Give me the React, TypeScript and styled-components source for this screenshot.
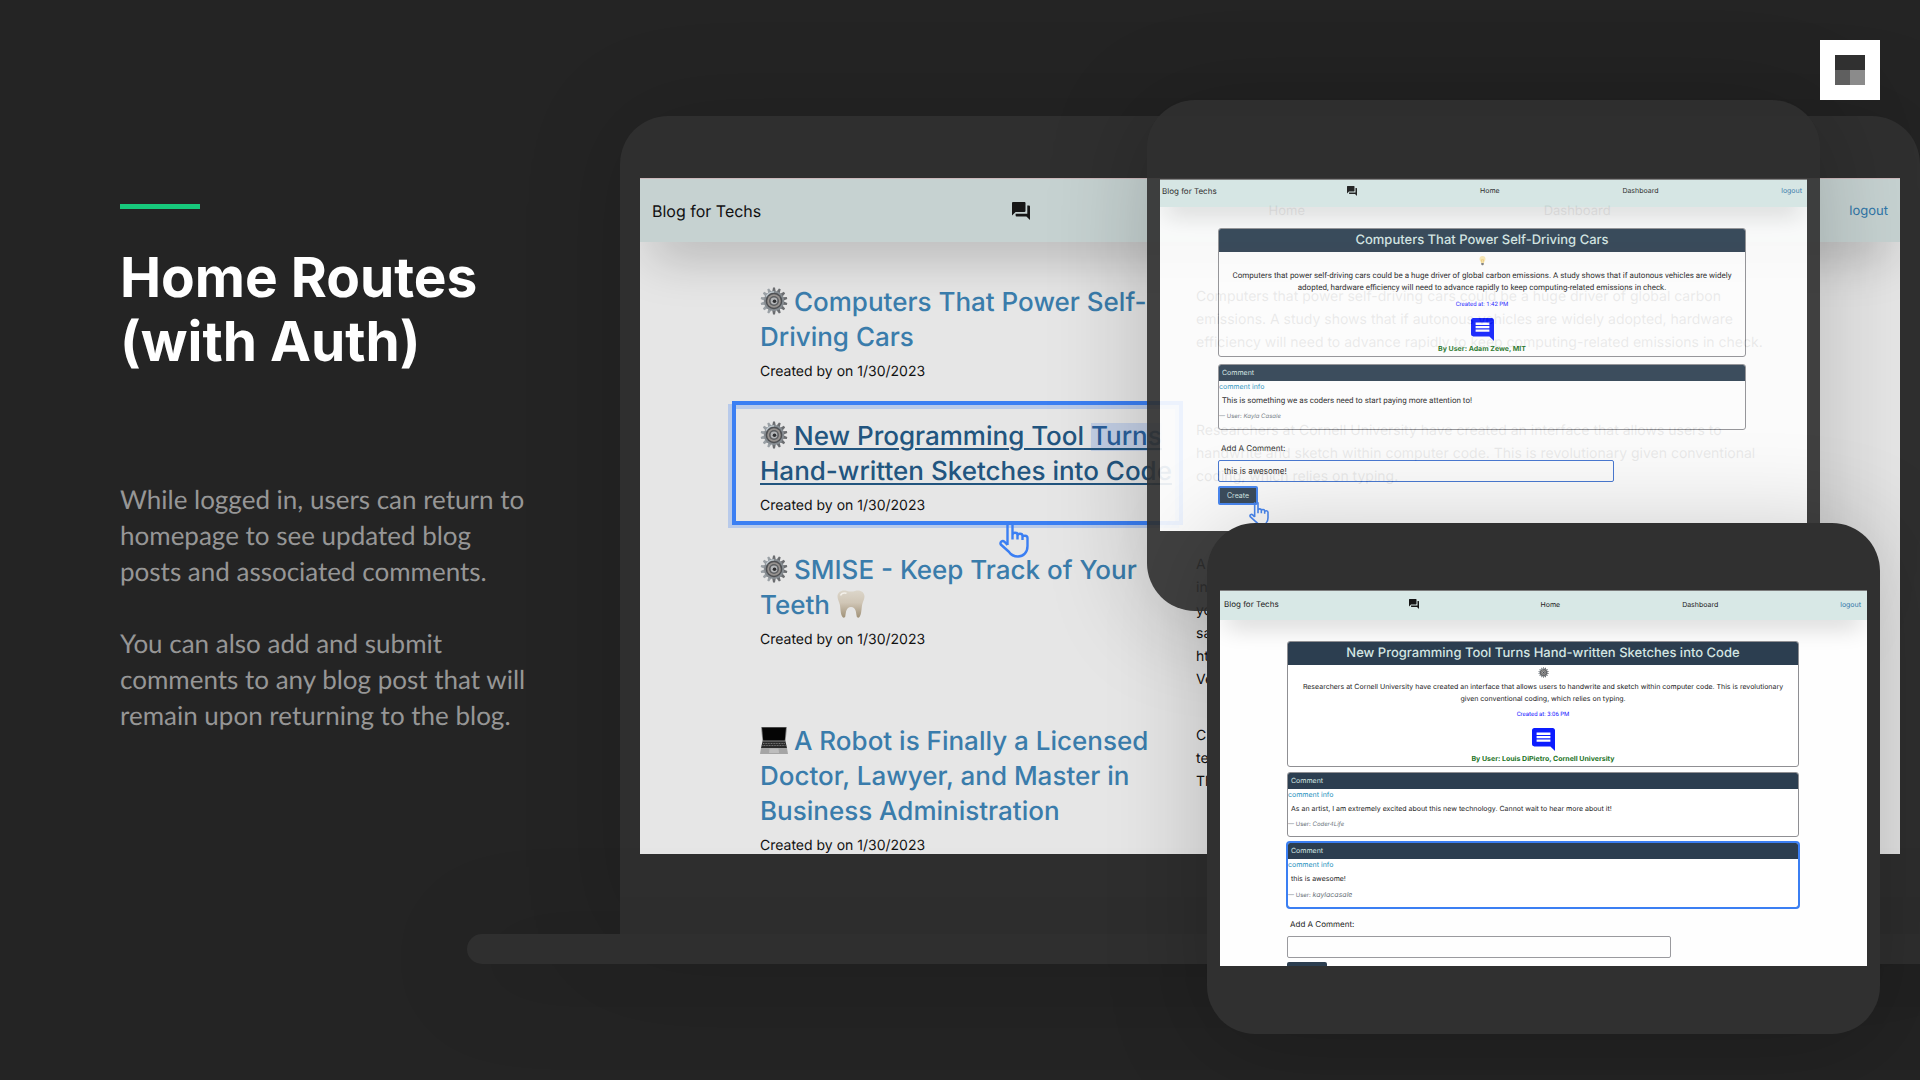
import React from "react";
import styled, { createGlobalStyle, css } from "styled-components";

const GlobalStyle = createGlobalStyle`
  *, *::before, *::after { box-sizing: border-box; }
  body { margin: 0; background: #242424; text-rendering: geometricPrecision; }
  h1, h2, p { margin: 0; }
  a { color: inherit; text-decoration: none; }
`;

const sans = `Inter, "Liberation Sans", sans-serif`;
const compactSans = `Roboto, "Liberation Sans", sans-serif`;
const blue = "#3b7ff3";

/* ---------- slide ---------- */

const Slide = styled.main`
  position: relative;
  display: grid;
  grid-template-columns: 620px minmax(0, 1fr);
  min-height: 100vh;
  overflow: hidden;
  background: #242424;
`;

const Caption = styled.section`
  padding: 204px 88px 0 120px;
  font-family: Lato, "Open Sans", sans-serif;
`;

const Accent = styled.div`
  width: 80px;
  height: 5px;
  background: #17c97c;
`;

const Heading = styled.h1`
  margin-top: 37px;
  font-family: ${sans};
  font-size: 55px;
  line-height: 64px;
  font-weight: 700;
  color: #fff;
`;

const Body = styled.div`
  display: flex;
  flex-direction: column;
  gap: 36px;
  margin-top: 107px;
  font-size: 26px;
  line-height: 36px;
  color: #969696;
`;

const Showcase = styled.section`
  position: relative;
  padding-top: 116px;
  font-family: ${sans};
`;

const Logo = styled.svg`
  position: absolute;
  top: 40px;
  right: 40px;
  width: 60px;
  height: 60px;
`;

/* ---------- laptop ---------- */

const LaptopLid = styled.div`
  padding: 62px 20px 80px;
  border-radius: 48px 48px 0 0;
  background: #2f2f2f;
  box-shadow: 0 0 100px rgba(0, 0, 0, 0.16);
`;

const LaptopBase = styled.div`
  position: relative;
  height: 30px;
  margin: 0 -153px;
  border-radius: 15px;
  background: #2f2f2f;
  box-shadow: 0 10px 100px rgba(0, 0, 0, 0.2);
`;

const LaptopScreen = styled.div`
  height: 676px;
  overflow: hidden;
  background: #e6e6e6;
  color: #111;
`;

const LaptopNav = styled.nav`
  position: relative;
  display: flex;
  align-items: center;
  justify-content: space-between;
  height: 64px;
  padding: 0 12px;
  border-top: 1px solid #cdb9bb;
  background: #c6d2d1;
  box-shadow: 0 25px 50px -12px rgba(0, 0, 0, 0.25);
  font-size: 13px;
`;

const Brand = styled.span<{ $size: number }>`
  font-size: ${(p) => p.$size}px;
`;

const LogoutLink = styled.a<{ $size: number }>`
  font-size: ${(p) => p.$size}px;
  color: #2f76a8;
`;

const Posts = styled.div`
  display: grid;
  gap: 33px;
  padding: 43px 120px 0;
`;

const Post = styled.article`
  display: grid;
  grid-template-columns: 420px minmax(0, 1fr);
  gap: 16px;
`;

const PostIntro = styled.div<{ $selected?: boolean }>`
  position: relative;
  ${(p) =>
    p.$selected &&
    css`
      &::after {
        content: "";
        position: absolute;
        inset: -18px -3px -5px -28px;
        border: 4px solid ${blue};
        box-shadow:
          -4px 3px 0 rgba(59, 127, 243, 0.27),
          inset -4px 4px 0 rgba(59, 127, 243, 0.27);
      }
    `}
`;

const PostTitle = styled.h2`
  font-size: 26px;
  line-height: 35px;
  font-weight: 500;
  color: #3a7cab;
`;

const PostLink = styled.a<{ $active?: boolean }>`
  ${(p) =>
    p.$active &&
    css`
      color: #22557f;
      text-decoration: underline;
      text-decoration-thickness: 2px;
      text-underline-offset: 3px;
    `}
`;

const Marked = styled.mark`
  background: linear-gradient(#c3cfe5, #c3cfe5) center / 100% 28px no-repeat;
  color: #2a5f9b;
`;

const Glyph = styled.svg<{ $size: number }>`
  width: ${(p) => p.$size}px;
  height: ${(p) => p.$size}px;
  flex: none;
`;

const NavGlyph = styled(Glyph)`
  margin-left: ${(p) => (p.$size > 12 ? 12 : 8)}px;
`;

const TitleGlyph = styled(Glyph)`
  margin-right: 6px;
  vertical-align: -4px;
`;

const PostMeta = styled.p`
  margin-top: 3px;
  font-size: 14px;
  line-height: 28px;
`;

const PostText = styled.p`
  font-size: 14px;
  line-height: 23px;
`;

const Line = styled.span`
  display: block;
`;

const Pointer = styled.svg<{ $w: number; $x: number; $y: number }>`
  position: absolute;
  z-index: 1;
  left: ${(p) => p.$x}px;
  top: ${(p) => p.$y}px;
  width: ${(p) => p.$w}px;
  overflow: visible;
`;

/* ---------- tablets ---------- */

const Tablet = styled.div<{ $back?: boolean }>`
  position: absolute;
  top: ${(p) => (p.$back ? 100 : 523)}px;
  right: ${(p) => (p.$back ? 100 : 40)}px;
  width: 673px;
  padding: ${(p) => (p.$back ? "79px 13px 80px" : "67px 13px 68px")};
  border-radius: 48px;
  background: #303030;
  box-shadow: 0 10px 100px rgba(0, 0, 0, 0.22);
  opacity: ${(p) => (p.$back ? 0.91 : 1)};
`;

const TabletScreen = styled.div<{ $back?: boolean }>`
  height: ${(p) => (p.$back ? 352 : 376)}px;
  overflow: hidden;
  border-top: 1px solid #7c7c7c;
  background: #fefefe;
  color: #222;
`;

const TabletNav = styled.nav<{ $back?: boolean }>`
  display: flex;
  align-items: center;
  justify-content: space-between;
  height: ${(p) => (p.$back ? 27 : 29)}px;
  padding: ${(p) => (p.$back ? "0 5px 6px 2px" : "0 6px 3px 4px")};
  background: #d8e8e6;
  box-shadow: 0 12px 24px -6px rgba(0, 0, 0, 0.2);
  font-size: 7px;
`;

const Stack = styled.div<{ $back?: boolean }>`
  display: flex;
  flex-direction: column;
  gap: ${(p) => (p.$back ? 7 : 5)}px;
  padding: ${(p) => (p.$back ? "21px 61px 0 58px" : "21px 68px 0 67px")};
`;

const Card = styled.article<{ $selected?: boolean }>`
  overflow: hidden;
  border: 1px solid #8f8f93;
  border-radius: 3px;
  background: #fff;
  ${(p) =>
    p.$selected &&
    css`
      outline: 2px solid ${blue};
      outline-offset: -1px;
    `}
`;

const Story = styled(Card)`
  display: flex;
  flex-direction: column;
  align-items: center;
  padding-bottom: 2px;
`;

const StoryTitle = styled.h2<{ $back?: boolean }>`
  align-self: stretch;
  margin-bottom: ${(p) => (p.$back ? 3 : 2)}px;
  background: #2c3e50;
  color: #d4e6e3;
  font-size: 13px;
  line-height: 23px;
  font-weight: 500;
  text-align: center;
`;

const copyText = css<{ $back?: boolean }>`
  font-family: ${(p) => (p.$back ? compactSans : sans)};
  font-size: ${(p) => (p.$back ? 8 : 7)}px;
  line-height: 12px;
`;

const StoryText = styled.p<{ $back?: boolean }>`
  ${copyText}
  padding: ${(p) => (p.$back ? "4px 12px 0" : "3px 6px 0")};
  text-align: center;
`;

const Created = styled.p<{ $back?: boolean }>`
  margin: ${(p) => (p.$back ? 7 : 6)}px 0 9px;
  font-family: ${compactSans};
  font-size: 6px;
  line-height: 8px;
  color: #1414ff;
`;

const Author = styled.p`
  margin-top: 3px;
  font-size: 7px;
  line-height: 10px;
  font-weight: 700;
  color: #1d741f;
`;

const CommentTitle = styled.h2`
  padding-left: 3px;
  background: #2c3e50;
  color: #d4e6e3;
  font-size: 7px;
  line-height: 16px;
  font-weight: 400;
`;

const CommentInfo = styled.a`
  display: block;
  margin-top: 1px;
  font-size: 7px;
  line-height: 10px;
  color: #2490bd;
`;

const CommentText = styled.p<{ $back?: boolean }>`
  ${copyText}
  padding: 3px 3px 6px;
`;

const CommentUser = styled.p<{ $large?: boolean; $back?: boolean }>`
  padding-bottom: ${(p) => (p.$back ? 8 : 7)}px;
  font-size: 6px;
  line-height: 8px;
  color: #6c757d;
  em {
    font-size: ${(p) => (p.$large ? 7 : 6)}px;
    line-height: 8px;
  }
`;

const CommentForm = styled.form`
  display: flex;
  flex-direction: column;
  align-items: flex-start;
  margin-top: 5px;
`;

const Label = styled.label`
  padding-left: 3px;
  font-size: 8px;
  line-height: 12px;
`;

const TextBox = styled.input<{ $focused?: boolean }>`
  width: 75%;
  height: 22px;
  margin: 6px 0 4px;
  padding: 0 5px;
  border: 1px solid ${(p) => (p.$focused ? "#3b6fd0" : "#9a9a9e")};
  border-radius: 2px;
  outline: none;
  background: transparent;
  color: #222;
  font: 8px ${sans};
`;

const CreateButton = styled.button<{ $selected?: boolean }>`
  height: 19px;
  padding: 0 7px;
  border: 2px solid ${(p) => (p.$selected ? blue : "#2c3e50")};
  border-radius: 2px;
  background: #2c3e50;
  color: #d4e6e3;
  font: 7px ${sans};
`;

/* ---------- drawings ---------- */

function BrandMark() {
  return (
    <Logo viewBox="0 0 60 60" role="img" aria-label="Logo">
      <rect width="60" height="60" fill="#fff" />
      <rect x="15" y="15" width="30" height="15" fill="#303030" />
      <rect x="15" y="30" width="15" height="15" fill="#5f5f5f" />
      <rect x="30" y="30" width="15" height="15" fill="#8b8b8b" />
    </Logo>
  );
}

function ForumIcon({ size }: { size: number }) {
  return (
    <NavGlyph $size={size} viewBox="2 2 20 20" aria-hidden="true">
      <path
        fill="#161616"
        d="M21 6h-2v9H6v2c0 .55.45 1 1 1h11l4 4V7c0-.55-.45-1-1-1zm-4 6V3c0-.55-.45-1-1-1H3c-.55 0-1 .45-1 1v14l4-4h10c.55 0 1-.45 1-1z"
      />
    </NavGlyph>
  );
}

function CommentIcon() {
  return (
    <Glyph $size={23} viewBox="2 2 20 20" aria-hidden="true">
      <path
        fill="#0c1cff"
        d="M21.99 4c0-1.100-.89-2-1.990-2H4c-1.100 0-2 .9-2 2v12c0 1.100.9 2 2 2h14l4 4-.01-18zM18 14H6v-2h12v2zm0-3H6V9h12v2zm0-3H6V6h12v2z"
      />
    </Glyph>
  );
}

const teeth = Array.from({ length: 14 }, (_, i) => (i * 360) / 14);

function GearShapes() {
  return (
    <>
      {teeth.map((angle) => (
        <path
          key={angle}
          d="M12.300 4.500 13 .6h2l.7 3.900z"
          fill={angle > 180 ? "#9aa0a5" : "#6b6d70"}
          transform={`rotate(${angle} 14 14)`}
        />
      ))}
      <circle cx="14" cy="14" r="10.200" fill="#858b90" />
      <circle cx="14" cy="14" r="8.300" fill="#4e5053" />
      <circle cx="14" cy="14" r="6.800" fill="#96928f" />
      <circle cx="14" cy="14" r="5" fill="#5d5f62" />
      <circle cx="14" cy="14" r="3.400" fill="#b4b6b8" />
      <circle cx="14.500" cy="14.300" r="1.800" fill="#2e2f31" />
      <path d="M6 9.500a9.200 9.200 0 0 1 8-4.700" stroke="#c3ccd2" strokeWidth="1.300" fill="none" />
    </>
  );
}

function LaptopShapes() {
  return (
    <>
      <path d="M1 1h26l-1.500 15h-23z" fill="#8d8d8d" />
      <path d="M2 1.500h24L24.800 14.500H3.200z" fill="#050505" />
      <path d="M2.500 15.500h23L27 22H1z" fill="#2b2b2b" />
      <path d="M3 17.500h22M2.500 19.500h23" stroke="#8a8a8a" strokeWidth=".8" strokeDasharray="1 .6" />
      <path d="M1 22h26l1 6H0z" fill="#a5a5a5" />
      <path d="M9.500 22.500h9l.6 4.500H9z" fill="#bdbdbd" />
    </>
  );
}

function ToothShapes() {
  return (
    <>
      <defs>
        <linearGradient id="enamel" x1="0" y1="0" x2="0" y2="1">
          <stop offset="0" stopColor="#dcd6ca" />
          <stop offset=".45" stopColor="#d0c6b6" />
          <stop offset="1" stopColor="#a09177" />
        </linearGradient>
      </defs>
      <path
        fill="url(#enamel)"
        d="M.5 6.500C.5 1.500 5.500-.6 10 .9c2.500.9 5.500.9 8 0C22.500-.6 27.500 1.500 27.500 6.500c0 3-1.700 5-2.300 8-.9 4.500-.5 9.500-2.700 12.600-.9 1.100-2.500.8-2.800-.8-.8-4-.6-9.300-5.700-9.300s-4.900 5.300-5.700 9.300c-.3 1.600-1.900 1.900-2.800.8C3.300 24 3.700 19 2.800 14.500c-.6-3-2.300-5-2.300-8z"
      />
      <path d="M3.500 5.500c1-2.300 3.500-3 6-2.200" stroke="#f3f0ea" strokeWidth="1.500" fill="none" />
    </>
  );
}

function Bulb() {
  return (
    <Glyph $size={11} viewBox="0 0 22 22" role="img" aria-label="light bulb">
      <path d="M11 2a6 6 0 0 0-6 6c0 3.500 3 5 3 8h6c0-3 3-4.500 3-8a6 6 0 0 0-6-6z" fill="#fbe9b4" />
      <path d="M9.500 15 9 9.500h4l-.5 5.500" stroke="#e5b94f" fill="none" />
      <path d="M8.500 16h5v3l-1.500 1.500h-2L8.500 19z" fill="#7b7b7b" />
    </Glyph>
  );
}

function Hand({ width, x, y }: { width: number; x: number; y: number }) {
  return (
    <Pointer $w={width} $x={x} $y={y} viewBox="0 0 30 34" aria-hidden="true">
      <path
        d="M8.500 21V-1M13.500 15.500V-1M13.500 11c0-3 5-3 5 0v4.500M18.500 12c0-3 5-3 5 0v4M23.500 13.500c0-2.500 5-2.500 5 .5v8c0 6.500-4 10.500-9.500 10.500-4.500 0-7-1.500-9.400-5L1.800 20.500c-1.200-2.500 1.700-4.600 3.700-2.700l3 3.200"
        fill="none"
        stroke={blue}
        strokeWidth="2.400"
        strokeLinejoin="round"
      />
    </Pointer>
  );
}

/* ---------- screens ---------- */

type PostProps = {
  glyph: "gear" | "laptop";
  title: React.ReactNode;
  selected?: boolean;
  children: React.ReactNode;
};

function BlogPost({ glyph, title, selected, children }: PostProps) {
  return (
    <Post>
      <PostIntro $selected={selected}>
        <PostTitle>
          <TitleGlyph $size={28} viewBox="0 0 28 28" role="img" aria-label={glyph}>
            {glyph === "gear" ? <GearShapes /> : <LaptopShapes />}
          </TitleGlyph>
          <PostLink href="#" $active={selected}>
            {title}
          </PostLink>
        </PostTitle>
        <PostMeta>Created by on 1/30/2023</PostMeta>
        {selected && <Hand width={30} x={239} y={105} />}
      </PostIntro>
      <PostText>{children}</PostText>
    </Post>
  );
}

function HomeScreen() {
  return (
    <LaptopScreen>
      <LaptopNav>
        <Brand $size={16}>Blog for Techs</Brand>
        <ForumIcon size={18} />
        <a href="#">Home</a>
        <a href="#">Dashboard</a>
        <LogoutLink href="#" $size={13}>logout</LogoutLink>
      </LaptopNav>
      <Posts>
        <BlogPost glyph="gear" title="Computers That Power Self-Driving Cars">
          Computers that power self-driving cars could be a huge driver of global carbon emissions. A study shows that if
          autonous vehicles are widely adopted, hardware efficiency will need to advance rapidly to keep
          computing-related emissions in check.
        </BlogPost>
        <BlogPost
          glyph="gear"
          selected
          title={<>New Programming Tool <Marked>Turns</Marked> Hand-written Sketches into Code</>}
        >
          Researchers at Cornell University have created an interface that allows users to handwrite and sketch within
          computer code. This is revolutionary given conventional coding, which relies on typing.
        </BlogPost>
        <BlogPost
          glyph="gear"
          title={
            <>
              SMISE - Keep Track of Your Teeth{" "}
              <TitleGlyph $size={28} viewBox="0 0 28 28" role="img" aria-label="tooth">
                <ToothShapes />
              </TitleGlyph>
            </>
          }
        >
          {["A", "in", "yo", "sa", "ht", "Ve"].map((text) => <Line key={text}>{text}</Line>)}
        </BlogPost>
        <BlogPost
          glyph="laptop"
          title="A Robot is Finally a Licensed Doctor, Lawyer, and Master in Business Administration"
        >
          {["C", "te", "Th"].map((text) => <Line key={text}>{text}</Line>)}
        </BlogPost>
      </Posts>
    </LaptopScreen>
  );
}

type CommentData = { text: string; user: string; selected?: boolean };

type StoryProps = {
  back?: boolean;
  title: string;
  icon: React.ReactNode;
  text: string;
  time: string;
  author: string;
  comments: CommentData[];
  draft?: string;
};

function StoryTablet({ back, title, icon, text, time, author, comments, draft }: StoryProps) {
  const fieldId = back ? "comment-first" : "comment-second";
  return (
    <Tablet $back={back}>
      <TabletScreen $back={back}>
        <TabletNav $back={back}>
          <Brand $size={8}>Blog for Techs</Brand>
          <ForumIcon size={10} />
          <a href="#">Home</a>
          <a href="#">Dashboard</a>
          <LogoutLink href="#" $size={7}>logout</LogoutLink>
        </TabletNav>
        <Stack $back={back}>
          <Story>
            <StoryTitle $back={back}>{title}</StoryTitle>
            {icon}
            <StoryText $back={back}>{text}</StoryText>
            <Created $back={back}>Created at: {time}</Created>
            <CommentIcon />
            <Author>By User: {author}</Author>
          </Story>
          {comments.map((comment) => (
            <Card key={comment.user} $selected={comment.selected}>
              <CommentTitle>Comment</CommentTitle>
              <CommentInfo href="#">comment info</CommentInfo>
              <CommentText $back={back}>{comment.text}</CommentText>
              <CommentUser $back={back} $large={comment.selected}>
                — User: <em>{comment.user}</em>
              </CommentUser>
            </Card>
          ))}
          <CommentForm>
            <Label htmlFor={fieldId}>Add A Comment:</Label>
            <TextBox id={fieldId} type="text" defaultValue={draft} $focused={back} />
            <CreateButton type="button" $selected={back}>Create</CreateButton>
          </CommentForm>
        </Stack>
      </TabletScreen>
      {back && <Hand width={20} x={102} y={403} />}
    </Tablet>
  );
}

export default function App() {
  return (
    <Slide>
      <GlobalStyle />
      <Caption>
        <Accent />
        <Heading>
          Home Routes
          <br />
          (with Auth)
        </Heading>
        <Body>
          <p>While logged in, users can return to homepage to see updated blog posts and associated comments.</p>
          <p>You can also add and submit comments to any blog post that will remain upon returning to the blog.</p>
        </Body>
      </Caption>
      <Showcase>
        <LaptopLid>
          <HomeScreen />
        </LaptopLid>
        <LaptopBase />
        <StoryTablet
          back
          title="Computers That Power Self-Driving Cars"
          icon={<Bulb />}
          text="Computers that power self-driving cars could be a huge driver of global carbon emissions. A study shows that if autonous vehicles are widely adopted, hardware efficiency will need to advance rapidly to keep computing-related emissions in check."
          time="1:42 PM"
          author="Adam Zewe, MIT"
          comments={[
            { text: "This is something we as coders need to start paying more attention to!", user: "Kayla Casale" },
          ]}
          draft="this is awesome!"
        />
        <StoryTablet
          title="New Programming Tool Turns Hand-written Sketches into Code"
          icon={
            <Glyph $size={11} viewBox="0 0 28 28" role="img" aria-label="gear">
              <GearShapes />
            </Glyph>
          }
          text="Researchers at Cornell University have created an interface that allows users to handwrite and sketch within computer code. This is revolutionary given conventional coding, which relies on typing."
          time="3:06 PM"
          author="Louis DiPietro, Cornell University"
          comments={[
            {
              text: "As an artist, I am extremely excited about this new technology. Cannot wait to hear more about it!",
              user: "Coder4Life",
            },
            { text: "this is awesome!", user: "kaylacasale", selected: true },
          ]}
        />
      </Showcase>
      <BrandMark />
    </Slide>
  );
}
